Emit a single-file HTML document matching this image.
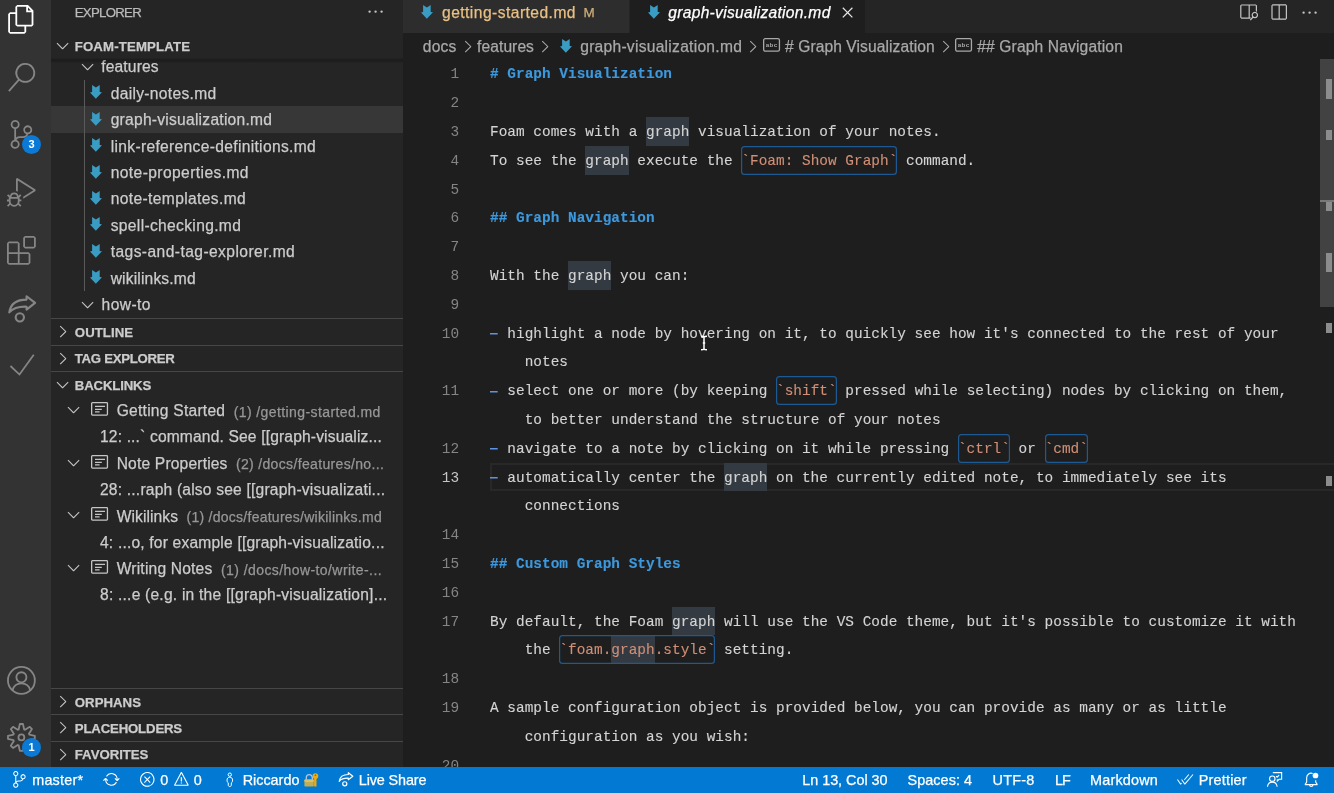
<!DOCTYPE html>
<html>
<head>
<meta charset="utf-8">
<title>graph-visualization.md - foam-template</title>
<style>
*{box-sizing:border-box;margin:0;padding:0}
html,body{width:1334px;height:793px;overflow:hidden;background:#1e1e1e}
body{font-family:"Liberation Sans",sans-serif;color:#cccccc;position:relative}
#app{position:absolute;left:0;top:0;width:1334px;height:793px;overflow:hidden;will-change:transform}
.abs{position:absolute}
.t{position:absolute;white-space:pre;line-height:normal;-webkit-text-stroke:0.25px}
svg{position:absolute;display:block;overflow:visible}
#activity{position:absolute;left:0;top:0;width:51px;height:767px;background:#333333}
#activity svg.ic{left:7.2px;width:28.8px;height:28.8px;fill:#868686}
.badge{position:absolute;width:19.2px;height:19.2px;border-radius:10px;background:#0a7ad6;color:#fff;font-size:11px;font-weight:bold;text-align:center;line-height:19px}
#sidebar{position:absolute;left:51px;top:0;width:352px;height:767px;background:#252526;overflow:hidden}
#sidebar .sel{position:absolute;left:0;top:106.4px;width:352px;height:26.4px;background:#373738}
#sidebar .hr{position:absolute;left:0;width:352px;height:1px;background:#474747}
#sidebar svg.cv{width:16px;height:16px;fill:#c5c5c5}
#tabs{position:absolute;left:403px;top:0;width:931px;height:33px;background:#252526}
#crumbs{position:absolute;left:403px;top:33px;width:931px;height:26.4px;background:#1e1e1e}
#editor{position:absolute;left:403px;top:59.4px;width:931px;height:707.6px;background:#1e1e1e;overflow:hidden;font-family:"Liberation Mono",monospace;font-size:14.4px;color:#d4d4d4}
.ln{position:absolute;left:0;width:56.2px;text-align:right;height:28.8px;line-height:28.8px;color:#858585;letter-spacing:0.03px;white-space:pre}
.ln.cur{color:#c6c6c6}
.cl{position:absolute;left:87px;height:28.8px;line-height:28.8px;white-space:pre;letter-spacing:0.03px;-webkit-text-stroke:0.12px}
.cl.w{left:121.68px}
.h{color:#3d99de;font-weight:bold}
.b{color:transparent;display:inline-block;width:8.670px;height:28.800px;vertical-align:top;letter-spacing:0;background:linear-gradient(#5b94e4,#5b94e4) 0 13.400px/7.700px 1.500px no-repeat}
.k{color:#d08f76}
.kr{position:absolute;height:28.8px;box-shadow:inset 0 0 0 1.2px #1d5a93;border-radius:3.5px}
.gr{position:absolute;height:28.8px;background:#343a41}
#status{position:absolute;left:0;top:766.6px;width:1334px;height:26.4px;background:#0279d2;color:#ffffff}
#status svg{fill:#fff}

</style>
</head>
<body>
<div id="app">
<div id="activity"><svg class="ic" style="top:5.1px;fill:#ffffff" viewBox="0 0 24 24"><path d="M17.5 0h-9L7 1.5V6H2.5L1 7.5v15.07L2.5 24h12.07L16 22.57V18h4.7l1.3-1.43V4.5L17.5 0zm0 2.12l2.38 2.38H17.5V2.12zm-3 20.38h-12v-15H7v9.07L8.5 18h6v4.5zm6-6h-12v-15H16V6h4.5v10.5z"/></svg><svg class="ic" style="top:62.7px" viewBox="0 0 24 24"><path d="M15.25 0a8.25 8.25 0 0 0-6.18 13.72L1 22.88l1.12 1 8.05-9.12A8.251 8.251 0 1 0 15.25.01V0zm0 15a6.75 6.75 0 1 1 0-13.5 6.75 6.75 0 0 1 0 13.5z"/></svg><svg class="ic" style="top:120.3px" viewBox="0 0 24 24"><path d="M21.007 8.222A3.738 3.738 0 0 0 15.045 5.2a3.737 3.737 0 0 0 1.156 6.583 2.988 2.988 0 0 1-2.668 1.67h-2.99a4.456 4.456 0 0 0-2.989 1.165V7.4a3.737 3.737 0 1 0-1.494 0v9.117a3.776 3.776 0 1 0 1.816.099 2.99 2.99 0 0 1 2.668-1.667h2.99a4.484 4.484 0 0 0 4.223-3.039 3.736 3.736 0 0 0 3.25-3.687zM4.565 3.738a2.242 2.242 0 1 1 4.484 0 2.242 2.242 0 0 1-4.484 0zm4.484 16.441a2.242 2.242 0 1 1-4.484 0 2.242 2.242 0 0 1 4.484 0zm8.221-9.715a2.242 2.242 0 1 1 0-4.485 2.242 2.242 0 0 1 0 4.485z"/></svg><svg class="ic" style="top:177.9px" viewBox="0 0 24 24"><path d="M10.94 13.5l-1.32 1.32a3.73 3.73 0 0 0-7.24 0L1.06 13.5 0 14.56l1.72 1.72-.22.22V18H0v1.5h1.5v.08c.077.489.214.966.41 1.42L0 22.94 1.06 24l1.65-1.65A4.308 4.308 0 0 0 6 24a4.31 4.31 0 0 0 3.29-1.65L10.94 24 12 22.94 10.09 21c.198-.464.336-.951.41-1.45v-.1H12V18h-1.5v-1.5l-.22-.22L12 14.56l-1.06-1.06zM6 13.5a2.25 2.25 0 0 1 2.25 2.25h-4.5A2.25 2.25 0 0 1 6 13.5zm3 6a3.33 3.33 0 0 1-3 3 3.33 3.33 0 0 1-3-3v-2.25h6v2.25zm14.76-9.9v1.26L13.5 17.37V15.6l8.5-5.37L9 2v9.46a5.07 5.07 0 0 0-1.5-.72V.63L8.64 0l15.12 9.6z"/></svg><svg class="ic" style="top:235.5px" viewBox="0 0 24 24"><path d="M13.5 1.5L15 0h7.5L24 1.5V9l-1.5 1.5H15L13.5 9V1.5zm1.5 0V9h7.5V1.5H15zM0 15V6l1.5-1.5H9L10.5 6v7.5H18l1.5 1.5v7.5L18 24H1.5L0 22.5V15zm9-1.5V6H1.5v7.5H9zM9 15H1.5v7.5H9V15zm1.5 7.5H18V15h-7.5v7.5z"/></svg><svg class="ic" style="top:293.1px" viewBox="0 0 24 24"><g fill="none" stroke="#868686" stroke-width="1.750" stroke-linejoin="round"><path d="M16.3 5.5V2.700L23.400 8.200L16.300 13.800V11.400C10.500 11.200 5.500 12 1.900 16.200C3 8.500 9 5.500 16.300 5.500Z"/><circle cx="10.700" cy="20.300" r="3.450"/></g></svg><svg class="ic" style="top:350.7px" viewBox="0 0 24 24"><path d="M2.900 12.500L10.400 19.600L22.300 3.100" fill="none" stroke="#868686" stroke-width="1.450"/></svg><svg class="ic" style="top:666.0px" viewBox="0 0 24 24"><g fill="none" stroke="#868686" stroke-width="1.5"><circle cx="12" cy="12" r="11.2"/><circle cx="12" cy="9.4" r="4.2"/><path d="M4.6 20.2c1-4 4-5.800 7.400-5.800s6.400 1.800 7.400 5.800"/></g></svg><svg class="ic" style="top:723.0px" viewBox="0 0 24 24"><g fill="none" stroke="#868686" stroke-width="1.5" stroke-linejoin="round"><circle cx="12" cy="12" r="2.45"/><path d="M9.70 5.39 L10.71 0.82 L13.29 0.82 L14.30 5.39 L15.05 5.70 L18.99 3.18 L20.82 5.01 L18.30 8.95 L18.61 9.70 L23.18 10.71 L23.18 13.29 L18.61 14.30 L18.30 15.05 L20.82 18.99 L18.99 20.82 L15.05 18.30 L14.30 18.61 L13.29 23.18 L10.71 23.18 L9.70 18.61 L8.95 18.30 L5.01 20.82 L3.18 18.99 L5.70 15.05 L5.39 14.30 L0.82 13.29 L0.82 10.71 L5.39 9.70 L5.70 8.95 L3.18 5.01 L5.01 3.18 L8.95 5.70Z"/></g></svg><div class="badge" style="left:21.9px;top:134.9px">3</div><div class="badge" style="left:21.9px;top:737.9px">1</div></div>
<div id="sidebar"><div class="sel"></div><div style="position:absolute;left:33px;top:80px;width:1.2px;height:210.800px;background:#5a5a5a"></div><svg class="cv" viewBox="0 0 16 16" style="left:27.30px;top:57.07px;width:19.2px;height:19.2px"><path d="M7.976 10.072l4.357-4.357.62.618L8.284 11h-.618L3 6.333l.619-.618 4.357 4.357z"/></svg><div class="t" style="left:50.30px;top:57.58px;font-size:15.6px;color:#cccccc;letter-spacing:0.130px;">features</div><svg viewBox="0 0 12 13.8" style="left:38.90px;top:85.40px;width:12px;height:13.8px"><polygon points="2.1,0 5.9,2.5 9.7,0 9.7,7 12,7.2 5.85,13.8 0,7.5 2.1,7.1" fill="#3a9cc2"/></svg><div class="t" style="left:59.70px;top:84.88px;font-size:15.6px;color:#cccccc;letter-spacing:0.314px;">daily-notes.md</div><svg viewBox="0 0 12 13.8" style="left:38.90px;top:111.80px;width:12px;height:13.8px"><polygon points="2.1,0 5.9,2.5 9.7,0 9.7,7 12,7.2 5.85,13.8 0,7.5 2.1,7.1" fill="#3a9cc2"/></svg><div class="t" style="left:59.70px;top:111.28px;font-size:15.6px;color:#cccccc;letter-spacing:0.249px;">graph-visualization.md</div><svg viewBox="0 0 12 13.8" style="left:38.90px;top:138.20px;width:12px;height:13.8px"><polygon points="2.1,0 5.9,2.5 9.7,0 9.7,7 12,7.2 5.85,13.8 0,7.5 2.1,7.1" fill="#3a9cc2"/></svg><div class="t" style="left:59.70px;top:137.68px;font-size:15.6px;color:#cccccc;letter-spacing:0.325px;">link-reference-definitions.md</div><svg viewBox="0 0 12 13.8" style="left:38.90px;top:164.60px;width:12px;height:13.8px"><polygon points="2.1,0 5.9,2.5 9.7,0 9.7,7 12,7.2 5.85,13.8 0,7.5 2.1,7.1" fill="#3a9cc2"/></svg><div class="t" style="left:59.70px;top:164.08px;font-size:15.6px;color:#cccccc;letter-spacing:0.406px;">note-properties.md</div><svg viewBox="0 0 12 13.8" style="left:38.90px;top:191.00px;width:12px;height:13.8px"><polygon points="2.1,0 5.9,2.5 9.7,0 9.7,7 12,7.2 5.85,13.8 0,7.5 2.1,7.1" fill="#3a9cc2"/></svg><div class="t" style="left:59.70px;top:190.48px;font-size:15.6px;color:#cccccc;letter-spacing:0.367px;">note-templates.md</div><svg viewBox="0 0 12 13.8" style="left:38.90px;top:217.40px;width:12px;height:13.8px"><polygon points="2.1,0 5.9,2.5 9.7,0 9.7,7 12,7.2 5.85,13.8 0,7.5 2.1,7.1" fill="#3a9cc2"/></svg><div class="t" style="left:59.70px;top:216.88px;font-size:15.6px;color:#cccccc;letter-spacing:0.335px;">spell-checking.md</div><svg viewBox="0 0 12 13.8" style="left:38.90px;top:243.80px;width:12px;height:13.8px"><polygon points="2.1,0 5.9,2.5 9.7,0 9.7,7 12,7.2 5.85,13.8 0,7.5 2.1,7.1" fill="#3a9cc2"/></svg><div class="t" style="left:59.70px;top:243.28px;font-size:15.6px;color:#cccccc;letter-spacing:0.428px;">tags-and-tag-explorer.md</div><svg viewBox="0 0 12 13.8" style="left:38.90px;top:270.20px;width:12px;height:13.8px"><polygon points="2.1,0 5.9,2.5 9.7,0 9.7,7 12,7.2 5.85,13.8 0,7.5 2.1,7.1" fill="#3a9cc2"/></svg><div class="t" style="left:59.70px;top:269.68px;font-size:15.6px;color:#cccccc;letter-spacing:0.159px;">wikilinks.md</div><svg class="cv" viewBox="0 0 16 16" style="left:27.30px;top:295.07px;width:19.2px;height:19.2px"><path d="M7.976 10.072l4.357-4.357.62.618L8.284 11h-.618L3 6.333l.619-.618 4.357 4.357z"/></svg><div class="t" style="left:50.60px;top:295.78px;font-size:15.6px;color:#cccccc;letter-spacing:0.415px;">how-to</div><div style="position:absolute;left:0;top:0;width:352px;height:59px;background:#252526"></div><div style="position:absolute;left:0;top:58.4px;width:352px;height:4.8px;background:linear-gradient(rgba(0,0,0,0),rgba(0,0,0,0.23) 25%,rgba(0,0,0,0.2) 70%,rgba(0,0,0,0))"></div><div class="t" style="left:23.70px;top:5.35px;font-size:13.2px;color:#bbbbbb;letter-spacing:-0.691px;">EXPLORER</div><svg viewBox="0 0 16 16" style="left:315.4px;top:2.4px;width:19.2px;height:19.2px"><path fill="#c5c5c5" d="M4 8a1 1 0 1 1-2 0 1 1 0 0 1 2 0zm5 0a1 1 0 1 1-2 0 1 1 0 0 1 2 0zm5 0a1 1 0 1 1-2 0 1 1 0 0 1 2 0z"/></svg><svg class="cv" viewBox="0 0 16 16" style="left:2.10px;top:36.47px;width:19.2px;height:19.2px"><path d="M7.976 10.072l4.357-4.357.62.618L8.284 11h-.618L3 6.333l.619-.618 4.357 4.357z"/></svg><div class="t" style="left:23.70px;top:39.35px;font-size:13.2px;color:#cccccc;letter-spacing:0.168px;font-weight:bold;">FOAM-TEMPLATE</div><div class="hr" style="top:318.0px"></div><svg class="cv" viewBox="0 0 16 16" style="left:2.17px;top:321.90px;width:19.2px;height:19.2px"><path d="M10.072 8.024L5.715 3.667l.618-.62L11 7.716v.618L6.333 13l-.618-.619 4.357-4.357z"/></svg><div class="t" style="left:23.80px;top:324.95px;font-size:13.2px;color:#cccccc;letter-spacing:0.073px;font-weight:bold;">OUTLINE</div><div class="hr" style="top:345.0px"></div><svg class="cv" viewBox="0 0 16 16" style="left:2.17px;top:348.90px;width:19.2px;height:19.2px"><path d="M10.072 8.024L5.715 3.667l.618-.62L11 7.716v.618L6.333 13l-.618-.619 4.357-4.357z"/></svg><div class="t" style="left:23.80px;top:351.05px;font-size:13.2px;color:#cccccc;letter-spacing:-0.282px;font-weight:bold;">TAG EXPLORER</div><div class="hr" style="top:371.0px"></div><svg class="cv" viewBox="0 0 16 16" style="left:2.00px;top:375.07px;width:19.2px;height:19.2px"><path d="M7.976 10.072l4.357-4.357.62.618L8.284 11h-.618L3 6.333l.619-.618 4.357 4.357z"/></svg><div class="t" style="left:23.80px;top:378.05px;font-size:13.2px;color:#cccccc;letter-spacing:-0.152px;font-weight:bold;">BACKLINKS</div><div class="hr" style="top:688.0px"></div><svg class="cv" viewBox="0 0 16 16" style="left:2.17px;top:691.90px;width:19.2px;height:19.2px"><path d="M10.072 8.024L5.715 3.667l.618-.62L11 7.716v.618L6.333 13l-.618-.619 4.357-4.357z"/></svg><div class="t" style="left:23.80px;top:694.95px;font-size:13.2px;color:#cccccc;letter-spacing:0.035px;font-weight:bold;">ORPHANS</div><div class="hr" style="top:714.0px"></div><svg class="cv" viewBox="0 0 16 16" style="left:2.17px;top:718.30px;width:19.2px;height:19.2px"><path d="M10.072 8.024L5.715 3.667l.618-.62L11 7.716v.618L6.333 13l-.618-.619 4.357-4.357z"/></svg><div class="t" style="left:23.80px;top:721.05px;font-size:13.2px;color:#cccccc;letter-spacing:-0.164px;font-weight:bold;">PLACEHOLDERS</div><div class="hr" style="top:741.0px"></div><svg class="cv" viewBox="0 0 16 16" style="left:2.17px;top:744.70px;width:19.2px;height:19.2px"><path d="M10.072 8.024L5.715 3.667l.618-.62L11 7.716v.618L6.333 13l-.618-.619 4.357-4.357z"/></svg><div class="t" style="left:23.80px;top:746.85px;font-size:13.2px;color:#cccccc;letter-spacing:-0.018px;font-weight:bold;">FAVORITES</div><svg class="cv" viewBox="0 0 16 16" style="left:12.65px;top:399.87px;width:19.2px;height:19.2px"><path d="M7.976 10.072l4.357-4.357.62.618L8.284 11h-.618L3 6.333l.619-.618 4.357 4.357z"/></svg><svg viewBox="0 0 17.1 13.8" style="left:40.00px;top:401.85px;width:17.1px;height:13.8px"><rect x="0.65" y="0.65" width="15.8" height="12.5" rx="0.8" fill="none" stroke="#c5c5c5" stroke-width="1.3"/><path d="M4 4.450h10M4 7.400h6.800M4 9.900h4.600" stroke="#c5c5c5" stroke-width="1.200" fill="none"/></svg><div class="t" style="left:65.70px;top:402.08px;font-size:15.6px;color:#cccccc;letter-spacing:0.247px;">Getting Started</div><div class="t" style="left:182.70px;top:403.53px;font-size:14.0px;color:#979797;letter-spacing:0.403px;">(1) /getting-started.md</div><div class="t" style="left:49.00px;top:428.08px;font-size:15.6px;color:#cccccc;letter-spacing:0.156px;">12: ...` command. See [[graph-visualiz...</div><svg class="cv" viewBox="0 0 16 16" style="left:12.65px;top:452.67px;width:19.2px;height:19.2px"><path d="M7.976 10.072l4.357-4.357.62.618L8.284 11h-.618L3 6.333l.619-.618 4.357 4.357z"/></svg><svg viewBox="0 0 17.1 13.8" style="left:40.00px;top:454.65px;width:17.1px;height:13.8px"><rect x="0.65" y="0.65" width="15.8" height="12.5" rx="0.8" fill="none" stroke="#c5c5c5" stroke-width="1.3"/><path d="M4 4.450h10M4 7.400h6.800M4 9.900h4.600" stroke="#c5c5c5" stroke-width="1.200" fill="none"/></svg><div class="t" style="left:65.70px;top:454.88px;font-size:15.6px;color:#cccccc;letter-spacing:0.170px;">Note Properties</div><div class="t" style="left:184.90px;top:456.33px;font-size:14.0px;color:#979797;letter-spacing:0.343px;">(2) /docs/features/no...</div><div class="t" style="left:49.00px;top:480.88px;font-size:15.6px;color:#cccccc;letter-spacing:0.198px;">28: ...raph (also see [[graph-visualizati...</div><svg class="cv" viewBox="0 0 16 16" style="left:12.65px;top:505.47px;width:19.2px;height:19.2px"><path d="M7.976 10.072l4.357-4.357.62.618L8.284 11h-.618L3 6.333l.619-.618 4.357 4.357z"/></svg><svg viewBox="0 0 17.1 13.8" style="left:40.00px;top:507.45px;width:17.1px;height:13.8px"><rect x="0.65" y="0.65" width="15.8" height="12.5" rx="0.8" fill="none" stroke="#c5c5c5" stroke-width="1.3"/><path d="M4 4.450h10M4 7.400h6.800M4 9.900h4.600" stroke="#c5c5c5" stroke-width="1.200" fill="none"/></svg><div class="t" style="left:65.70px;top:507.68px;font-size:15.6px;color:#cccccc;letter-spacing:0.084px;">Wikilinks</div><div class="t" style="left:135.60px;top:509.13px;font-size:14.0px;color:#979797;letter-spacing:0.254px;">(1) /docs/features/wikilinks.md</div><div class="t" style="left:49.00px;top:533.68px;font-size:15.6px;color:#cccccc;letter-spacing:0.186px;">4: ...o, for example [[graph-visualizatio...</div><svg class="cv" viewBox="0 0 16 16" style="left:12.65px;top:558.27px;width:19.2px;height:19.2px"><path d="M7.976 10.072l4.357-4.357.62.618L8.284 11h-.618L3 6.333l.619-.618 4.357 4.357z"/></svg><svg viewBox="0 0 17.1 13.8" style="left:40.00px;top:560.25px;width:17.1px;height:13.8px"><rect x="0.65" y="0.65" width="15.8" height="12.5" rx="0.8" fill="none" stroke="#c5c5c5" stroke-width="1.3"/><path d="M4 4.450h10M4 7.400h6.800M4 9.900h4.600" stroke="#c5c5c5" stroke-width="1.200" fill="none"/></svg><div class="t" style="left:65.70px;top:560.48px;font-size:15.6px;color:#cccccc;letter-spacing:0.191px;">Writing Notes</div><div class="t" style="left:170.00px;top:561.93px;font-size:14.0px;color:#979797;letter-spacing:0.417px;">(1) /docs/how-to/write-...</div><div class="t" style="left:49.00px;top:586.48px;font-size:15.6px;color:#cccccc;letter-spacing:0.216px;">8: ...e (e.g. in the [[graph-visualization]...</div></div>
<div id="top" style="position:absolute;left:0;top:0"><div id="tabs"></div><div id="crumbs"></div><div style="position:absolute;left:403px;top:0;width:226.4px;height:33px;background:#2d2d2d"></div><svg viewBox="0 0 12 13.8" style="left:421.10px;top:4.90px;width:12px;height:13.8px"><polygon points="2.1,0 5.9,2.5 9.7,0 9.7,7 12,7.2 5.85,13.8 0,7.5 2.1,7.1" fill="#3a9cc2"/></svg><div class="t" style="left:442.00px;top:3.88px;font-size:15.6px;color:#e8c084;letter-spacing:0.462px;">getting-started.md</div><div class="t" style="left:583.60px;top:4.97px;font-size:13.4px;color:#cfae79;letter-spacing:0.644px;">M</div><div style="position:absolute;left:630px;top:0;width:235px;height:33px;background:#1e1e1e"></div><svg viewBox="0 0 12 13.8" style="left:647.80px;top:4.90px;width:12px;height:13.8px"><polygon points="2.1,0 5.9,2.5 9.7,0 9.7,7 12,7.2 5.85,13.8 0,7.5 2.1,7.1" fill="#3a9cc2"/></svg><div class="t" style="left:668.30px;top:3.88px;font-size:15.6px;color:#ffffff;letter-spacing:0.286px;font-style:italic;">graph-visualization.md</div><svg viewBox="0 0 16 16" style="left:837.9px;top:3px;width:19.2px;height:19.2px"><path fill="#e8e8e8" d="M8 8.707l3.646 3.647.708-.707L8.707 8l3.647-3.646-.707-.708L8 7.293 4.354 3.646l-.707.708L7.293 8l-3.646 3.646.707.708L8 8.707z"/></svg><svg viewBox="0 0 16 16" style="left:1238.900px;top:2.100px;width:19.200px;height:19.200px"><path fill="#c5c5c5" d="M2 2h12l1 1v5.337a3.500 3.500 0 0 0-1-.837V3H9v10h1.050l-.700 1H2l-1-1V3l1-1zm6 11V3H2v10h6z"/><path fill="#c5c5c5" fill-rule="evenodd" d="M13.200 8.200a2.700 2.700 0 1 0 .01 0zm0 1a1.700 1.700 0 1 1-.01 0z"/><path d="M11.900 12.300l-2.500 2.900" stroke="#c5c5c5" stroke-width="1" fill="none"/></svg><svg viewBox="0 0 16 16" style="left:1268.700px;top:3.100px;width:19.200px;height:19.200px"><path fill="#c5c5c5" d="M14 1H3L2 2v11l1 1h11l1-1V2l-1-1zM8 13H3V2h5v11zm6 0H9V2h5v11z"/></svg><svg viewBox="0 0 16 16" style="left:1299.800px;top:2.900px;width:19.2px;height:19.2px"><path fill="#c5c5c5" d="M4 8a1 1 0 1 1-2 0 1 1 0 0 1 2 0zm5 0a1 1 0 1 1-2 0 1 1 0 0 1 2 0zm5 0a1 1 0 1 1-2 0 1 1 0 0 1 2 0z"/></svg><div class="t" style="left:422.80px;top:37.88px;font-size:15.6px;color:#a9a9a9;letter-spacing:0.212px;">docs</div><svg viewBox="0 0 16 16" style="left:457.50px;top:36.9px;width:19.2px;height:19.2px"><path fill="#a9a9a9" d="M10.072 8.024L5.715 3.667l.618-.62L11 7.716v.618L6.333 13l-.618-.619 4.357-4.357z"/></svg><div class="t" style="left:477.10px;top:37.88px;font-size:15.6px;color:#a9a9a9;letter-spacing:0.068px;">features</div><svg viewBox="0 0 16 16" style="left:534.80px;top:36.9px;width:19.2px;height:19.2px"><path fill="#a9a9a9" d="M10.072 8.024L5.715 3.667l.618-.62L11 7.716v.618L6.333 13l-.618-.619 4.357-4.357z"/></svg><svg viewBox="0 0 12 13.8" style="left:559.50px;top:38.50px;width:12px;height:13.8px"><polygon points="2.1,0 5.9,2.5 9.7,0 9.7,7 12,7.2 5.85,13.8 0,7.5 2.1,7.1" fill="#3a9cc2"/></svg><div class="t" style="left:580.20px;top:37.88px;font-size:15.6px;color:#a9a9a9;letter-spacing:0.267px;">graph-visualization.md</div><svg viewBox="0 0 16 16" style="left:743.10px;top:36.9px;width:19.2px;height:19.2px"><path fill="#a9a9a9" d="M10.072 8.024L5.715 3.667l.618-.62L11 7.716v.618L6.333 13l-.618-.619 4.357-4.357z"/></svg><svg viewBox="0 0 17.1 13.8" style="left:763.00px;top:38px;width:17.1px;height:13.8px"><rect x="0.65" y="0.65" width="15.8" height="12.5" rx="1.6" fill="none" stroke="#a9a9a9" stroke-width="1.3"/><text x="8.6" y="9.100" font-family="Liberation Sans" font-size="6.200" font-weight="bold" fill="#a9a9a9" text-anchor="middle" letter-spacing="0.300">abc</text></svg><div class="t" style="left:785.00px;top:37.88px;font-size:15.6px;color:#a9a9a9;letter-spacing:0.083px;"># Graph Visualization</div><svg viewBox="0 0 16 16" style="left:935.50px;top:36.9px;width:19.2px;height:19.2px"><path fill="#a9a9a9" d="M10.072 8.024L5.715 3.667l.618-.62L11 7.716v.618L6.333 13l-.618-.619 4.357-4.357z"/></svg><svg viewBox="0 0 17.1 13.8" style="left:955.40px;top:38px;width:17.1px;height:13.8px"><rect x="0.65" y="0.65" width="15.8" height="12.5" rx="1.6" fill="none" stroke="#a9a9a9" stroke-width="1.3"/><text x="8.6" y="9.100" font-family="Liberation Sans" font-size="6.200" font-weight="bold" fill="#a9a9a9" text-anchor="middle" letter-spacing="0.300">abc</text></svg><div class="t" style="left:977.20px;top:37.88px;font-size:15.6px;color:#a9a9a9;letter-spacing:0.145px;">## Graph Navigation</div></div>
<div id="editor"><div style="position:absolute;left:86.800px;top:403.4px;width:860px;height:28.600px;border:2.200px solid #282828"></div><div class="gr" style="left:243.06px;top:57.60px;width:43.35px"></div><div class="gr" style="left:182.37px;top:86.40px;width:43.35px"></div><div class="kr" style="left:338.43px;top:86.40px;width:156.06px"></div><div class="gr" style="left:165.03px;top:201.60px;width:43.35px"></div><div class="kr" style="left:373.11px;top:316.80px;width:60.69px"></div><div class="kr" style="left:555.18px;top:374.40px;width:52.02px"></div><div class="kr" style="left:641.88px;top:374.40px;width:43.35px"></div><div class="gr" style="left:321.09px;top:403.20px;width:43.35px"></div><div class="gr" style="left:269.07px;top:547.20px;width:43.35px"></div><div class="gr" style="left:208.38px;top:576.00px;width:43.35px"></div><div class="kr" style="left:156.36px;top:576.00px;width:156.06px"></div><div class="ln" style="top:1.0px">1</div><div class="cl" style="top:1.0px"><span class="h"># Graph Visualization</span></div><div class="ln" style="top:29.8px">2</div><div class="ln" style="top:58.6px">3</div><div class="cl" style="top:58.6px">Foam comes with a graph visualization of your notes.</div><div class="ln" style="top:87.4px">4</div><div class="cl" style="top:87.4px">To see the graph execute the <span class="k">`Foam: Show Graph`</span> command.</div><div class="ln" style="top:116.2px">5</div><div class="ln" style="top:145.0px">6</div><div class="cl" style="top:145.0px"><span class="h">## Graph Navigation</span></div><div class="ln" style="top:173.8px">7</div><div class="ln" style="top:202.6px">8</div><div class="cl" style="top:202.6px">With the graph you can:</div><div class="ln" style="top:231.4px">9</div><div class="ln" style="top:260.2px">10</div><div class="cl" style="top:260.2px"><span class="b">-</span> highlight a node by hovering on it, to quickly see how it's connected to the rest of your</div><div class="cl w" style="top:289.0px">notes</div><div class="ln" style="top:317.8px">11</div><div class="cl" style="top:317.8px"><span class="b">-</span> select one or more (by keeping <span class="k">`shift`</span> pressed while selecting) nodes by clicking on them,</div><div class="cl w" style="top:346.6px">to better understand the structure of your notes</div><div class="ln" style="top:375.4px">12</div><div class="cl" style="top:375.4px"><span class="b">-</span> navigate to a note by clicking on it while pressing <span class="k">`ctrl`</span> or <span class="k">`cmd`</span></div><div class="ln cur" style="top:404.2px">13</div><div class="cl" style="top:404.2px"><span class="b">-</span> automatically center the graph on the currently edited note, to immediately see its</div><div class="cl w" style="top:433.0px">connections</div><div class="ln" style="top:461.8px">14</div><div class="ln" style="top:490.6px">15</div><div class="cl" style="top:490.6px"><span class="h">## Custom Graph Styles</span></div><div class="ln" style="top:519.4px">16</div><div class="ln" style="top:548.2px">17</div><div class="cl" style="top:548.2px">By default, the Foam graph will use the VS Code theme, but it's possible to customize it with</div><div class="cl w" style="top:577.0px">the <span class="k">`foam.graph.style`</span> setting.</div><div class="ln" style="top:605.8px">18</div><div class="ln" style="top:634.6px">19</div><div class="cl" style="top:634.6px">A sample configuration object is provided below, you can provide as many or as little</div><div class="cl w" style="top:663.4px">configuration as you wish:</div><div class="ln" style="top:692.2px">20</div><div style="position:absolute;left:917px;top:0;width:14px;height:248px;background:#424242"></div><div style="position:absolute;left:922.8px;top:19.6px;width:6.2px;height:20.0px;background:#8c8c8c"></div><div style="position:absolute;left:922.8px;top:70.6px;width:6.2px;height:10.0px;background:#8c8c8c"></div><div style="position:absolute;left:922.8px;top:142.2px;width:6.2px;height:9.4px;background:#8c8c8c"></div><div style="position:absolute;left:922.8px;top:193.3px;width:6.2px;height:19.3px;background:#8c8c8c"></div><div style="position:absolute;left:922.8px;top:263.6px;width:6.2px;height:10.0px;background:#8c8c8c"></div><div style="position:absolute;left:922.8px;top:416.6px;width:6.2px;height:10.0px;background:#8c8c8c"></div><div style="position:absolute;left:917px;top:140.6px;width:14px;height:1.800px;background:#787878"></div><svg viewBox="0 0 8 16" style="left:296.600px;top:275.600px;width:8px;height:16px"><path d="M1 1.200c1.600 0 2.600.300 3 1 .400-.700 1.400-1 3-1M4 2v12M1 14.800c1.600 0 2.600-.300 3-1 .400.700 1.400 1 3 1M2.800 8h2.400" stroke="#ffffff" stroke-width="1.500" fill="none"/></svg></div>
<div id="status"><svg viewBox="0 0 24 24" style="left:10.800px;top:4.600px;width:16.800px;height:16.800px"><path d="M21.007 8.222A3.738 3.738 0 0 0 15.045 5.200a3.737 3.737 0 0 0 1.156 6.583 2.988 2.988 0 0 1-2.668 1.670h-2.990a4.456 4.456 0 0 0-2.989 1.165V7.400a3.737 3.737 0 1 0-1.494 0v9.117a3.776 3.776 0 1 0 1.816.099 2.990 2.990 0 0 1 2.668-1.667h2.990a4.484 4.484 0 0 0 4.223-3.039 3.736 3.736 0 0 0 3.250-3.687zM4.565 3.738a2.242 2.242 0 1 1 4.484 0 2.242 2.242 0 0 1-4.484 0zm4.484 16.441a2.242 2.242 0 1 1-4.484 0 2.242 2.242 0 0 1 4.484 0zm8.221-9.715a2.242 2.242 0 1 1 0-4.485 2.242 2.242 0 0 1 0 4.485z"/></svg><div class="t" style="left:32.20px;top:5.27px;font-size:14.4px;color:#ffffff;letter-spacing:0.215px;">master*</div><svg viewBox="0 0 16 16" style="left:103.200px;top:4.500px;width:16.800px;height:16.800px"><path d="M2.006 8.267L.780 9.500 0 8.730l2.090-2.070.760.010 2.090 2.120-.760.760-1.167-1.180a5 5 0 0 0 9.400 1.983l.813.597a6 6 0 0 1-11.220-2.683zm10.990-.466L11.760 6.550l-.760.760 2.090 2.110.760.010 2.090-2.070-.750-.760-1.194 1.180a6 6 0 0 0-11.110-2.920l.810.594a5 5 0 0 1 9.300 2.346z"/></svg><svg viewBox="0 0 16 16" style="left:139.050px;top:4.450px;width:16.800px;height:16.800px"><path d="M8.600 1c1.600.100 3.100.900 4.200 2 1.300 1.400 2 3.100 2 5.100 0 1.600-.600 3.100-1.600 4.400-1 1.200-2.400 2.100-4 2.400-1.600.300-3.200.100-4.600-.700-1.400-.800-2.500-2-3.100-3.500C.900 9.200.800 7.500 1.300 6c.500-1.600 1.400-2.900 2.800-3.800C5.400 1.300 7 .900 8.600 1zm.500 12.900c1.300-.300 2.500-1 3.400-2.100.800-1.100 1.300-2.400 1.200-3.800 0-1.600-.600-3.200-1.700-4.300-1-1-2.200-1.600-3.600-1.700-1.300-.100-2.700.200-3.800 1-1.100.800-1.900 1.900-2.300 3.300-.400 1.300-.400 2.700.200 4 .600 1.300 1.500 2.300 2.700 3 1.200.700 2.600.900 3.900.600zM7.900 7.500L10.300 5l.700.700-2.400 2.500 2.400 2.500-.700.700-2.400-2.500-2.400 2.500-.700-.700 2.400-2.500-2.400-2.500.700-.700 2.400 2.500z"/></svg><div class="t" style="left:160.30px;top:5.27px;font-size:14.4px;color:#ffffff;letter-spacing:-0.416px;">0</div><svg viewBox="0 0 16 16" style="left:172.600px;top:4.600px;width:16.800px;height:16.800px"><path d="M7.560 1h.880l6.540 12.260-.440.740H1.440L1 13.260 7.560 1zM8 2.280L2.280 13H13.700L8 2.280zM8.625 12v-1h-1.250v1h1.250zm-1.250-2V6h1.250v4h-1.250z"/></svg><div class="t" style="left:193.80px;top:5.27px;font-size:14.4px;color:#ffffff;letter-spacing:-0.616px;">0</div><svg viewBox="0 0 8 16" style="left:225.900px;top:5.300px;width:7.600px;height:15.600px"><g fill="none" stroke="#fff" stroke-width="1.050"><circle cx="4" cy="2.600" r="1.750"/><path d="M1.100 8.300c0-2 1.200-3 2.900-3s2.900 1 2.900 3c0 1.600-.500 2.500-1.300 3v2.300c0 .900-.700 1.500-1.600 1.500s-1.600-.600-1.600-1.500v-2.300c-.800-.500-1.300-1.400-1.300-3z"/></g></svg><div class="t" style="left:242.70px;top:5.27px;font-size:14.4px;color:#ffffff;letter-spacing:-0.012px;">Riccardo</div><svg viewBox="0 0 15 14" style="left:303.600px;top:6px;width:15px;height:14px"><path d="M2.300 7V4.600a3 3 0 0 1 6 0V7" fill="none" stroke="#b4c6de" stroke-width="1.300"/><circle cx="11.400" cy="3.100" r="2.850" fill="#f2a90a"/><circle cx="11.400" cy="2.200" r="0.800" fill="#0279d2"/><rect x="10.100" y="5" width="2.400" height="8.500" fill="#f2a90a"/><rect x="0.400" y="6.500" width="9.400" height="7" rx="0.800" fill="#c2ad55"/><rect x="0.400" y="6.500" width="9.400" height="2.400" rx="0.800" fill="#d4c36c"/></svg><svg viewBox="0 0 24 24" style="left:338px;top:4.650px;width:15.200px;height:15.200px"><g fill="none" stroke="#fff" stroke-width="1.900" stroke-linejoin="round"><path d="M16.300 5.500V2.700L23.400 8.200L16.300 13.800V11.400C10.500 11.200 5.500 12 1.900 16.200C3 8.500 9 5.500 16.300 5.500Z"/><circle cx="10.700" cy="20.300" r="3.300"/></g></svg><div class="t" style="left:358.80px;top:5.27px;font-size:14.4px;color:#ffffff;letter-spacing:-0.121px;">Live Share</div><div class="t" style="left:802.20px;top:5.27px;font-size:14.4px;color:#ffffff;letter-spacing:-0.016px;">Ln 13, Col 30</div><div class="t" style="left:907.50px;top:5.27px;font-size:14.4px;color:#ffffff;letter-spacing:0.078px;">Spaces: 4</div><div class="t" style="left:992.60px;top:5.27px;font-size:14.4px;color:#ffffff;letter-spacing:0.224px;">UTF-8</div><div class="t" style="left:1054.90px;top:5.27px;font-size:14.4px;color:#ffffff;letter-spacing:-0.998px;">LF</div><div class="t" style="left:1090.10px;top:5.27px;font-size:14.4px;color:#ffffff;letter-spacing:0.176px;">Markdown</div><svg viewBox="0 0 16 16" style="left:1177.100px;top:4.700px;width:16.800px;height:16.800px"><path d="M15.620 3.596L7.815 12.810l-.728-.033L4 8.382l.754-.530 2.744 3.907L14.917 3l.703.596z"/><path d="M7.234 8.774l4.386-5.178L10.917 3l-4.230 4.994.547.780zm-1.550.403l.548.780-.547-.780zm-1.617 1.910l.547.780-.799.943-.728-.033L0 8.382l.754-.530 2.744 3.907.570-.672z"/></svg><div class="t" style="left:1198.80px;top:5.27px;font-size:14.4px;color:#ffffff;letter-spacing:0.189px;">Prettier</div><svg viewBox="0 0 16 16" style="left:1266px;top:4.700px;width:16.800px;height:16.800px"><g fill="none" stroke="#fff" stroke-width="1.050"><path d="M6.500 1.500h8.400v6.400h-2.400l-1.700 1.600V7.900"/><circle cx="6" cy="7.300" r="2.600"/><path d="M1.400 15c.300-2.800 2-4.400 4.600-4.400s4.300 1.600 4.600 4.400"/><path d="M9.600 4.900l1 1 1.900-2" /></g></svg><svg viewBox="0 0 16 16" style="left:1302.700px;top:4.700px;width:16.800px;height:16.800px"><g fill="none" stroke="#fff" stroke-width="1.050"><path d="M9.200 2.300A4.300 4.300 0 0 0 3.500 6.400v4.200L2.200 12.500v.500h11.200v-.500l-1.300-1.900V8.900"/><path d="M6.300 13.200a1.600 1.600 0 0 0 3.200 0"/></g><circle cx="11.900" cy="4.300" r="2.700" fill="#fff"/></svg></div>
</div>
</body>
</html>
